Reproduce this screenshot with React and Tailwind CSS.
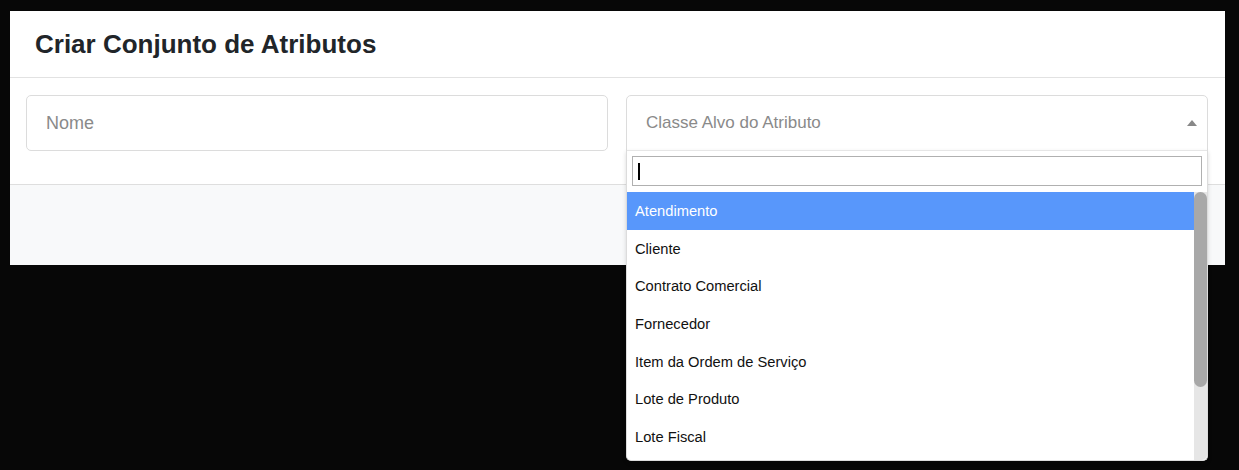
import React from 'react';

const opcoes = [
  'Atendimento',
  'Cliente',
  'Contrato Comercial',
  'Fornecedor',
  'Item da Ordem de Serviço',
  'Lote de Produto',
  'Lote Fiscal',
];

const App = () => {
  return (
    <div
      className="h-[470px] w-[1239px] overflow-hidden bg-[#070707] pt-[11px] pl-[10px]"
      style={{ fontFamily: '"Liberation Sans", Arial, sans-serif' }}
    >
      <div className="w-[1215px] bg-white">
        <header className="flex h-[67px] items-center border-b border-[#e2e2e2] px-[25px]">
          <h1 className="text-[26px] font-bold text-[#212529]">Criar Conjunto de Atributos</h1>
        </header>

        <section className="flex h-[107px] gap-[18px] border-b border-[#dedede] pt-[17px] pl-[16px] pr-[17px]">
          <div className="flex h-[56px] w-[582px] items-center rounded-[5px] border border-[#dcdcdc] px-[19px]">
            <input
              className="w-full bg-transparent text-[18px] text-[#333] outline-none placeholder:text-[#8a8a8a]"
              placeholder="Nome"
            />
          </div>

          <div className="relative w-[582px]">
            <div className="flex h-[56px] items-center justify-between rounded-t-[5px] border border-[#dcdcdc] px-[19px]">
              <span className="text-[17px] text-[#8a8a8a]">Classe Alvo do Atributo</span>
              <svg width="10" height="6" viewBox="0 0 10 6" className="mr-[-9px]">
                <path d="M0 6 L5 0 L10 6 Z" fill="#888" />
              </svg>
            </div>

            <div className="absolute left-0 top-[55px] z-10 w-[582px] rounded-b-[5px] border border-t-0 border-[#dcdcdc] bg-white shadow-[0_2px_4px_rgba(0,0,0,0.15)]">
              <div className="border-t border-[#e6e6e6] px-[5px] pt-[5px] pb-[6px]">
                <div className="relative flex h-[30px] items-center border border-[#b0b0b0] px-[5px]">
                  <input className="w-full bg-transparent text-[14px] outline-none" />
                  <span className="absolute left-[5px] top-[6px] h-[17px] w-[2px] bg-black" />
                </div>
              </div>
              <div className="flex h-[268px] overflow-hidden rounded-b-[5px]">
                <ul className="flex-1">
                  {opcoes.map((o, i) => (
                    <li
                      key={o}
                      className={
                        'flex h-[37.7px] items-center pl-[8px] text-[14.7px] ' +
                        (i === 0 ? 'bg-[#5897fb] text-white' : 'text-[#111]')
                      }
                    >
                      {o}
                    </li>
                  ))}
                </ul>
                <div className="w-[13px] bg-[#e6e6e6]">
                  <div className="h-[195px] rounded-full bg-[#a8a8a8]" />
                </div>
              </div>
            </div>
          </div>
        </section>

        <footer className="h-[80px] bg-[#f8f9fa]" />
      </div>
    </div>
  );
};

export default App;
